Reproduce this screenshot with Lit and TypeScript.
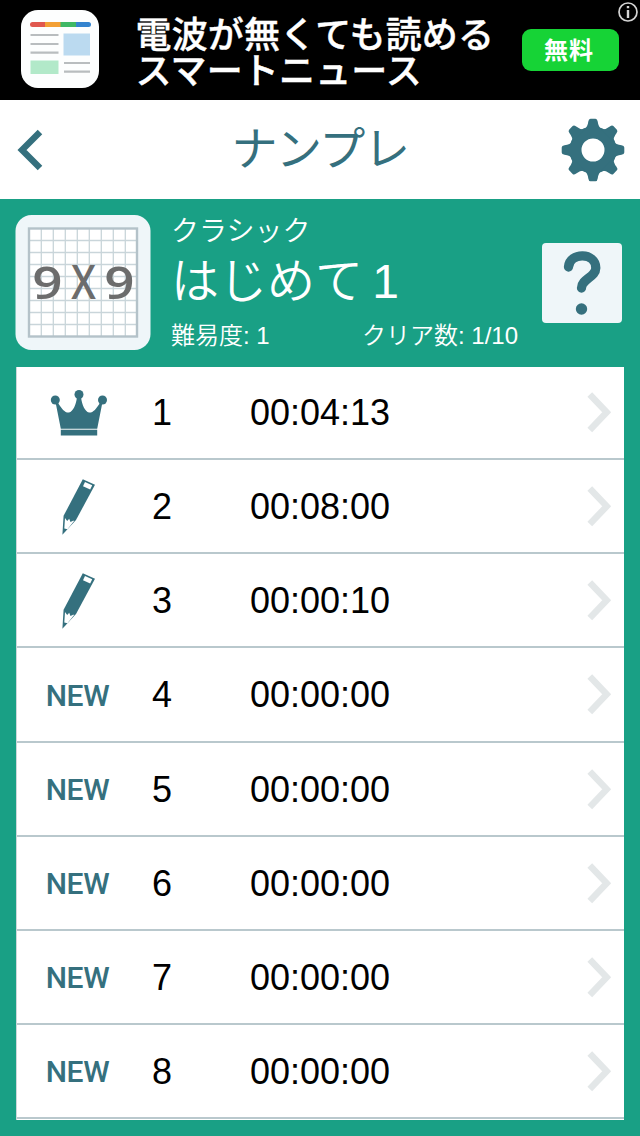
import { LitElement, html, css, svg } from "lit";
import { customElement, property } from "lit/decorators.js";

type Status = "crown" | "pencil" | "new";

interface Puzzle {
  no: number;
  time: string;
  status: Status;
}

const PUZZLES: Puzzle[] = [
  { no: 1, time: "00:04:13", status: "crown" },
  { no: 2, time: "00:08:00", status: "pencil" },
  { no: 3, time: "00:00:10", status: "pencil" },
  { no: 4, time: "00:00:00", status: "new" },
  { no: 5, time: "00:00:00", status: "new" },
  { no: 6, time: "00:00:00", status: "new" },
  { no: 7, time: "00:00:00", status: "new" },
  { no: 8, time: "00:00:00", status: "new" },
];

const GRID_LINES = [1, 2, 3, 4, 5, 6, 7, 8].map((i) => 14 + i * 12);

@customElement("ad-banner")
export class AdBanner extends LitElement {
  static styles = css`
    :host {
      display: flex;
      height: 100px;
      background: #000;
      color: #fff;
      position: relative;
      font-family: "Liberation Sans", "Noto Sans CJK JP", sans-serif;
    }
    .logo {
      width: 78px;
      height: 78px;
      margin: 10px 0 0 21px;
    }
    .copy {
      margin: 18px 0 0 36.5px;
      width: 386px;
      font: 500 36px/36px "Liberation Sans", "Noto Sans CJK JP", sans-serif;
      letter-spacing: 0.150px;
      -webkit-text-stroke: 0.4px #fff;
      white-space: nowrap;
    }
    .line {
      height: 36px;
    }
    .free {
      display: flex;
      align-items: center;
      justify-content: center;
      width: 97px;
      height: 42px;
      margin: 29px 0 0 0;
      border-radius: 9px;
      background: #16d336;
      font: 700 24px/40px "Noto Sans CJK JP", sans-serif;
      letter-spacing: 1px;
      padding: 0 2px 3px 0;
      box-sizing: border-box;
    }
    .info {
      position: absolute;
      right: 2px;
      top: 2px;
      width: 20px;
      height: 20px;
    }
  `;
  render() {
    return html`
      <svg class="logo" viewBox="0 0 78 78">
        <rect width="78" height="78" rx="17" fill="#fdfefe" />
        <rect x="9" y="12" width="30" height="5" rx="2.5" fill="#e0584f" />
        <rect x="39" y="12" width="31" height="5" rx="2.5" fill="#3484cf" />
        <rect x="24" y="12" width="16" height="5" fill="#f3a035" />
        <rect x="39.500" y="12" width="15.500" height="5" fill="#3fb865" />
        <path d="M9.500 25h28M9.500 34h28M9.500 42.700h28M43 53h26M43 61.700h26" stroke="#b9bdbf" stroke-width="2.200" />
        <rect x="42.500" y="23.500" width="26.500" height="22" fill="#bbdaf0" />
        <rect x="9.500" y="50.500" width="28" height="13.500" fill="#b2e9c9" />
      </svg>
      <div class="copy">
        <div class="line">電波が無くても読める</div>
        <div class="line">スマートニュース</div>
      </div>
      <div class="free">無料</div>
      <svg class="info" viewBox="0 0 20 20">
        <circle cx="10" cy="10" r="9" fill="#000" stroke="#d4d4d4" stroke-width="1.700" />
        <path d="M10 8v8M10 4v2.300" stroke="#d4d4d4" stroke-width="2.400" />
      </svg>
    `;
  }
}

@customElement("nav-header")
export class NavHeader extends LitElement {
  static styles = css`
    :host {
      display: flex;
      align-items: center;
      justify-content: space-between;
      height: 99px;
      box-sizing: border-box;
      padding: 0 15px 0 17px;
      background: #fff;
      color: #35707e;
    }
    .back {
      width: 64px;
      height: 42px;
    }
    .title {
      font: 400 46px/60px "Noto Sans CJK JP", sans-serif;
      letter-spacing: -1.4px;
      margin: 0 2px 10px 0;
    }
    .gear {
      width: 64px;
      height: 64px;
    }
  `;
  render() {
    const teeth = [0, 45, 90, 135, 180, 225, 270, 315];
    return html`
      <svg class="back" viewBox="0 0 64 42">
        <path d="M23 3 5 21 23 39" fill="none" stroke="#35707e" stroke-width="6.400" />
      </svg>
      <div class="title">ナンプレ</div>
      <svg class="gear" viewBox="-32 -32 64 64">
        <circle r="17.500" fill="none" stroke="#35707e" stroke-width="12" />
        ${teeth.map(
          (a) => svg`<path transform="rotate(${a})" fill="#35707e"
            d="M-9 -20Q-5.300 -23-4.700-28.500Q-4.300-31.300-2.500-31.300H2.500Q4.300-31.300 4.700-28.500Q5.300-23 9-20Z" />`
        )}
      </svg>
    `;
  }
}

@customElement("pack-summary")
export class PackSummary extends LitElement {
  static styles = css`
    :host {
      display: flex;
      height: 168px;
      box-sizing: border-box;
      color: #fff;
      font-family: "Liberation Sans", "Noto Sans CJK JP", sans-serif;
      font-weight: 350;
    }
    .board {
      width: 136px;
      height: 136px;
      margin: 16px 0 0 15px;
      flex: none;
    }
    .x9 {
      font: 600 42px "Open Sans", sans-serif;
      fill: #6c6c6c;
    }
    .info {
      width: 391px;
      padding-left: 20px;
      box-sizing: border-box;
      white-space: nowrap;
    }
    .category {
      font-size: 28px;
      line-height: 36px;
      margin-top: 15px;
    }
    .name {
      font-size: 48px;
      line-height: 60px;
      margin-top: 2px;
      word-spacing: -4px;
    }
    .stats {
      display: flex;
      font-size: 24px;
      line-height: 30px;
      margin-top: 9px;
    }
    .level {
      width: 191px;
    }
    .help {
      width: 80px;
      height: 80px;
      margin-top: 44px;
      flex: none;
    }
  `;
  render() {
    return html`
      <svg class="board" viewBox="0 0 136 136">
        <rect x="0.500" y="0" width="135" height="135" rx="16" fill="#eff6f9" />
        <rect x="14" y="13.500" width="108" height="108" fill="#fff" />
        ${GRID_LINES.map(
          (p) => svg`<path d="M${p + 0.3} 14V121M14 ${p - 0.5}H122" stroke="#c9d5da" stroke-width="1.300" />`
        )}
        <rect x="14" y="13.500" width="108" height="108" fill="none" stroke="#b4c2c9" stroke-width="2.400" />
        <g class="x9" text-anchor="middle">
          <text transform="translate(32.300 83.500) scale(1.260 1.090)">9</text>
          <text transform="translate(68.500 83.500) scale(0.940 1.100)">X</text>
          <text transform="translate(104.300 83.500) scale(1.260 1.090)">9</text>
        </g>
      </svg>
      <div class="info">
        <div class="category">クラシック</div>
        <div class="name">はじめて 1</div>
        <div class="stats">
          <div class="level">難易度: 1</div>
          <div>クリア数: 1/10</div>
        </div>
      </div>
      <svg class="help" viewBox="0 0 80 80">
        <rect width="80" height="80" rx="4" fill="#eff6f9" />
        <path d="M26.500 24C27.500 9 53.800 9 53.800 25C53.800 34 39.500 36 39.500 45" fill="none" stroke="#35707e" stroke-width="9.300" stroke-linecap="round" />
        <circle cx="39.500" cy="66" r="5.700" fill="#35707e" />
      </svg>
    `;
  }
}

@customElement("puzzle-row")
export class PuzzleRow extends LitElement {
  @property({ attribute: false }) puzzle!: Puzzle;

  static styles = css`
    :host {
      display: flex;
      align-items: center;
      height: 94.140px;
      flex: none;
      box-sizing: border-box;
      border-bottom: 2px solid #b9c8cd;
      font: 36px/42px "Liberation Sans", sans-serif;
      color: #000;
    }
    .mark {
      display: flex;
      justify-content: center;
      align-items: center;
      width: 121px;
    }
    .glyph {
      width: 60px;
      height: 60px;
    }
    .new {
      font: 500 30px/36px Roboto, sans-serif;
      letter-spacing: -0.3px;
      color: #35707e;
      padding-top: 3px;
    }
    .no {
      width: 48px;
      text-align: center;
      padding-top: 2px;
    }
    .time {
      flex: 1;
      padding: 2px 0 0 64px;
    }
    .chevron {
      width: 30px;
      height: 44px;
      margin-right: 11px;
    }
  `;

  mark() {
    if (this.puzzle.status === "crown") {
      return html`<svg class="glyph" viewBox="0 0 60 60" fill="#35707e">
        <circle cx="7.300" cy="18" r="4.500" />
        <circle cx="31" cy="12.500" r="4.500" />
        <circle cx="54.500" cy="18" r="4.500" />
        <path d="M7.300 19H9C14 28 17.500 31 21 30.500C25 29.500 28 23 29 15H33C34 23 37 29.500 41 30.500C44.500 31 48 28 53 19H54.700L49.200 46.800H12.800Z" />
        <rect x="12.800" y="47.700" width="36.400" height="5.800" />
      </svg>`;
    }
    if (this.puzzle.status === "pencil") {
      return html`<svg class="glyph" viewBox="1 0 60 60">
        <path d="M35.800 3.200 48 8.700 29 44 15.400 58.700 16.600 39.800Z" fill="#35707e" />
        <path d="M38 6 45.200 9.200 43.200 13.500 36 10.300Z" fill="#fff" />
        <path d="M18 42 20.200 45 22.200 42.700 23.500 46 26 44.800 27.300 44.800 20.500 53.200 17.300 52.500Z" fill="#fff" />
      </svg>`;
    }
    return html`<span class="new">NEW</span>`;
  }

  render() {
    return html`
      <div class="mark">${this.mark()}</div>
      <div class="no">${this.puzzle.no}</div>
      <div class="time">${this.puzzle.time}</div>
      <svg class="chevron" viewBox="0 0 30 44">
        <path d="M6.800 4.500 23.700 22.300 6.800 40.100" fill="none" stroke="#e3e7e8" stroke-width="6.500" />
      </svg>
    `;
  }
}

@customElement("app-root")
export class AppRoot extends LitElement {
  static styles = css`
    :host {
      display: flex;
      flex-direction: column;
      height: 1136px;
      background: #19a085;
      overflow: hidden;
    }
    .list {
      display: flex;
      flex-direction: column;
      justify-content: flex-end;
      height: 753px;
      box-sizing: border-box;
      padding-bottom: 1px;
      margin: 0 16px;
      background: #fff;
      border-left: 1px solid #ccd7da;
      overflow: hidden;
    }
  `;
  render() {
    return html`
      <ad-banner></ad-banner>
      <nav-header></nav-header>
      <pack-summary></pack-summary>
      <div class="list">
        ${PUZZLES.map((p) => html`<puzzle-row .puzzle=${p}></puzzle-row>`)}
      </div>
    `;
  }
}
